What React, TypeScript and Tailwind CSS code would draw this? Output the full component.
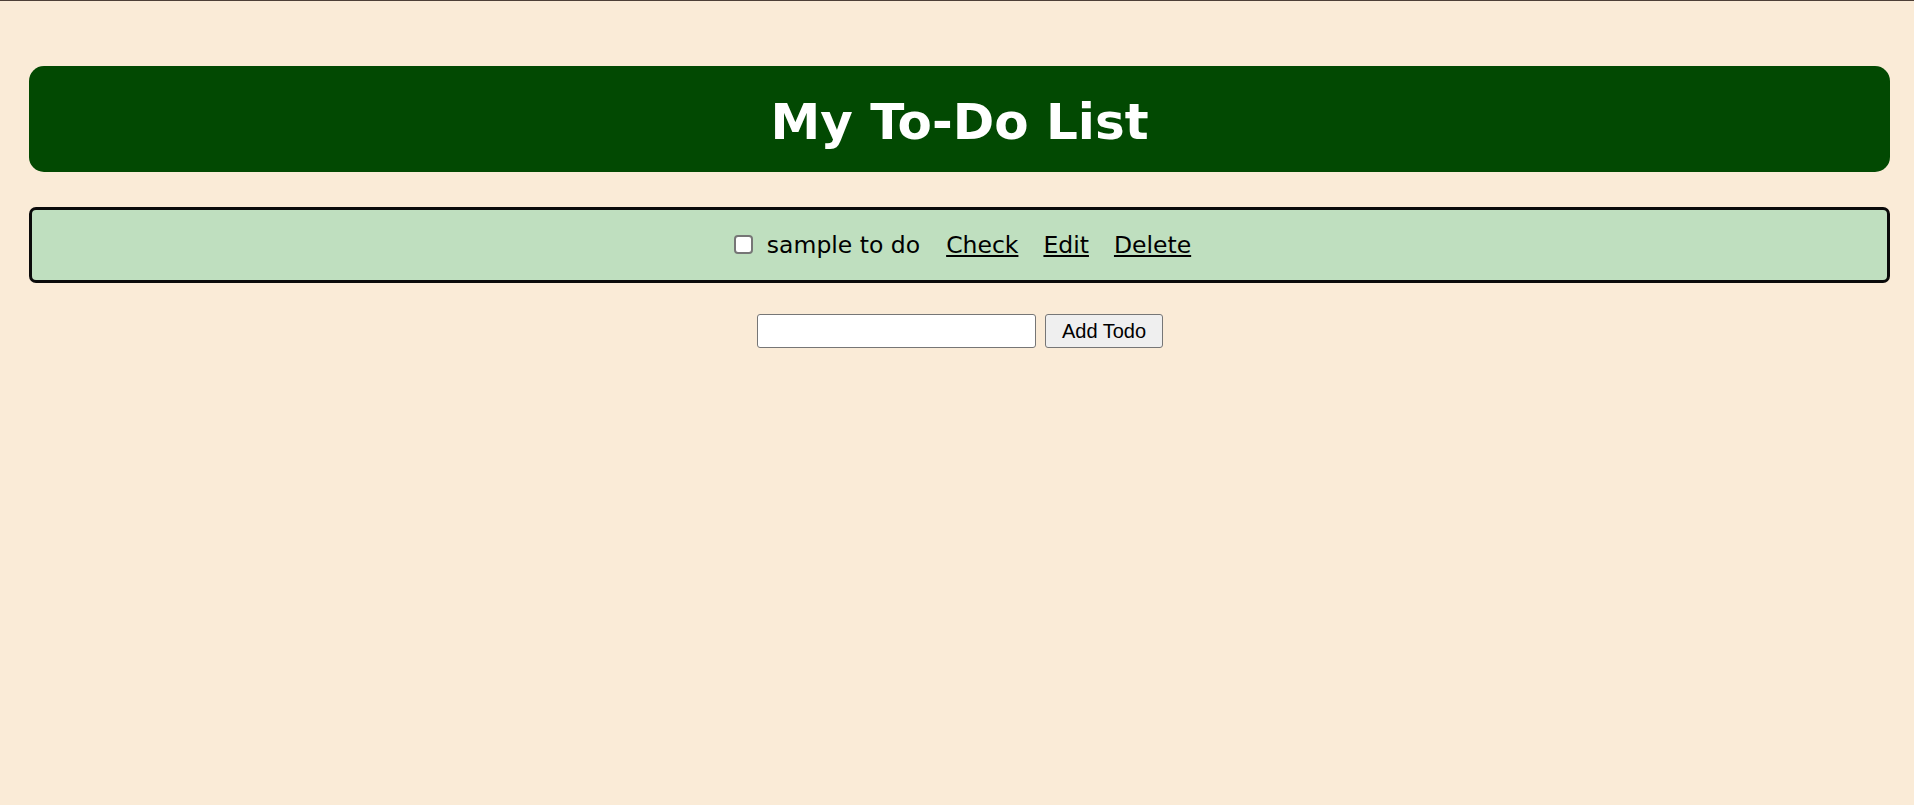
import React from "react";

export default function App() {
  return (
    <div className="min-h-[805px] w-full bg-[#faebd7]">
      <div className="h-px bg-[#4d3f37]" />
      <div className="ml-[29px] mr-[24px] mt-[65px]">
        <div className="flex h-[106px] items-center justify-center rounded-[15px] bg-[#024902] pt-[6px]">
          <h1
            className="text-[50px] font-bold leading-none text-white"
            style={{ fontFamily: '"Comic Sans MS", "DejaVu Sans", sans-serif' }}
          >
            My To-Do List
          </h1>
        </div>
        <div
          className="mt-[35px] flex h-[76px] items-center justify-center rounded-[7px] border-[3px] border-[#0a0a0a] bg-[#bfdfbf] pl-[6px] pt-[2px] text-[23.5px] text-black"
          style={{ fontFamily: '"Comic Sans MS", "DejaVu Sans", sans-serif' }}
        >
          <input
            type="checkbox"
            className="mb-[4px] h-[19px] w-[19px] appearance-none rounded-[4px] border-2 border-[#767676] bg-white"
          />
          <span className="ml-[14px]">sample to do</span>
          <a href="#" className="ml-[26px] underline">Check</a>
          <a href="#" className="ml-[25px] underline">Edit</a>
          <a href="#" className="ml-[25px] underline">Delete</a>
        </div>
      </div>
      <div
        className="mt-[31px] flex items-center justify-center gap-[9px] pl-[6px]"
        style={{ fontFamily: '"Liberation Sans", Arial, sans-serif' }}
      >
        <input
          type="text"
          className="h-[34px] w-[279px] rounded-[3px] border border-[#767676] bg-white px-1"
        />
        <button className="h-[34px] w-[118px] rounded-[3px] border border-[#767676] bg-[#efefef] text-[20px] text-black">
          Add Todo
        </button>
      </div>
    </div>
  );
}
